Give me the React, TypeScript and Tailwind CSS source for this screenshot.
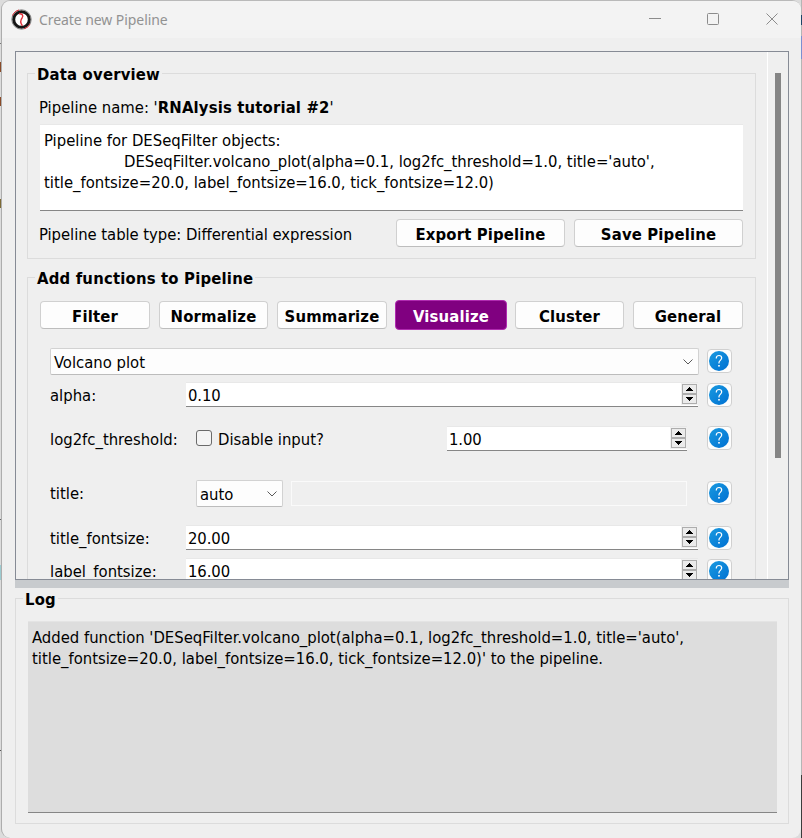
import React from "react";

function Legend({ children, className }: { children: React.ReactNode; className: string }) {
  return (
    <legend className={`h-[21px] pt-[1px] text-[16.5px] leading-[21px] font-bold tracking-[0.2px] whitespace-nowrap ${className}`}>
      {children}
    </legend>
  );
}

function Help({ className = "" }: { className?: string }) {
  return (
    <button
      className={`flex h-[24px] w-[25px] shrink-0 items-center rounded-[4px] border border-[#d0d0d0] bg-[#fdfdfd] pl-px ${className}`}
    >
      <svg width="20" height="20" viewBox="0 0 20 20" className="shrink-0">
        <defs>
          <linearGradient id="help" x1="0" y1="0" x2="1" y2="1">
            <stop offset="0" stopColor="#199ae0" />
            <stop offset="1" stopColor="#0070d2" />
          </linearGradient>
        </defs>
        <circle cx="10" cy="10" r="10" fill="url(#help)" />
        <path
          d="M7.3 7.6V7.1C7.3 5.5 8.5 4.5 10 4.5s2.7 1 2.7 2.6c0 2.1-2.7 2.4-2.7 4.4v1"
          fill="none"
          stroke="#fff"
          strokeWidth="1.2"
        />
        <rect x="9.2" y="14" width="1.6" height="1.6" fill="#fff" />
      </svg>
    </button>
  );
}

function Arrow({ down = false }: { down?: boolean }) {
  return (
    <span className="flex h-[10px] w-[15px] items-center justify-center border border-[#adadad] bg-[#ebebeb]">
      <svg width="7" height="4" viewBox="0 0 7 4" shapeRendering="crispEdges">
        <path
          d={down ? "M0 0h7v1h-1v1h-1v1h-1v1h-1v-1h-1v-1h-1v-1h-1z" : "M3 0h1v1h1v1h1v1h1v1h-7v-1h1v-1h1v-1h1z"}
          fill="#000"
        />
      </svg>
    </span>
  );
}

function Spin({ value, className }: { value: string; className: string }) {
  return (
    <div className={`flex shrink-0 items-start justify-between border-t border-b border-t-[#e8e8e8] border-b-[#868686] bg-white pl-[2px] ${className}`}>
      <span className="leading-[25px] tracking-[-0.1px]">{value}</span>
      <div className="flex flex-col border border-[#f0f0f0]">
        <Arrow />
        <Arrow down />
      </div>
    </div>
  );
}

function Chevron() {
  return (
    <svg width="10" height="6" viewBox="0 0 10 6" className="shrink-0">
      <path d="M.5.5 5 5 9.5.5" fill="none" stroke="#5a5a5a" strokeWidth="1" />
    </svg>
  );
}

function Combo({ value, className }: { value: string; className: string }) {
  return (
    <div className={`flex h-[27px] shrink-0 items-center justify-between rounded-[2px] border border-[#d2d2d2] border-b-[#bcbcbc] bg-[#fdfdfd] pl-[3px] ${className}`}>
      <span className="pt-px leading-[21px]">{value}</span>
      <Chevron />
    </div>
  );
}

function Button({ children, className = "" }: { children: React.ReactNode; className?: string }) {
  return (
    <button
      className={`h-[28px] shrink-0 rounded-[4px] border border-[#d0d0d0] border-b-[#bdbdbd] bg-[#fdfdfd] pt-[2px] text-center leading-[25px] font-bold tracking-[0.17px] whitespace-nowrap ${className}`}
    >
      {children}
    </button>
  );
}

function Label({ children }: { children: React.ReactNode }) {
  return <span className="w-[136px] shrink-0 pt-[3px] leading-[21px] whitespace-nowrap">{children}</span>;
}

function TitleBar() {
  return (
    <header className="flex h-[37px] shrink-0 items-center rounded-t-[8px] bg-[#f3f3f3] pl-[9px] text-[#929292]">
      <svg width="21" height="21" viewBox="0 0 21 21">
        <circle cx="10.5" cy="10.5" r="7.8" fill="#fff" stroke="#151515" strokeWidth="3" />
        <circle cx="10.5" cy="10.5" r="9.7" fill="none" stroke="#666" strokeWidth=".8" />
        <path d="M1.5 6.5C2.8 3.5 5 1.6 8 1M19 15c-1.4 2.5-3.5 4-6 4.6" stroke="#e0323c" strokeWidth="1" fill="none" />
        <path d="M8 4.5c3 .3 4.8 1.8 3.2 4.2-2 2.6-2.2 5 .2 8" stroke="#e0323c" strokeWidth="1.4" fill="none" />
      </svg>
      <span className="ml-[7px] font-['Noto_Sans'] text-[14px] tracking-[-0.07px] whitespace-nowrap">Create new Pipeline</span>
      <svg width="130" height="14" viewBox="0 0 130 14" className="mr-[22px] mb-[2px] ml-auto" fill="none" stroke="#8c8c8c">
        <path d="M0 6.5h12" />
        <rect x="58.5" y="1.5" width="11" height="11" rx="1" />
        <path d="m117.5 1.5 11 11m0-11-11 11" />
      </svg>
    </header>
  );
}

export default function App() {
  return (
    <div className="flex h-[838px] w-[802px] overflow-hidden bg-[#dcdcdc] font-['DejaVu_Sans_Condensed','DejaVu_Sans',sans-serif] text-[16.5px] text-black">
      <div className="flex w-[1px] shrink-0 flex-col pt-[43px]">
        <div className="h-px bg-[#777]" />
        <div className="mt-[18px] h-[10px] bg-[#8a4b28]" />
        <div className="mt-[25px] h-[9px] bg-[#8a4b28]" />
        <div className="mt-[93px] h-[9px] bg-[#7d6a35]" />
        <div className="mt-[311px] h-px bg-[#666]" />
        <div className="mt-[45px] h-[15px] bg-[#9ccbd0]" />
        <div className="mt-[170px] h-px bg-[#555]" />
      </div>
      <main className="mt-px flex h-[837px] w-[800px] shrink-0 flex-col rounded-[9px] border-l border-[#adadad] bg-[#efefef] shadow-[0_-1px_0_#b9b9b9]">
        <TitleBar />

        <section className="mt-[13px] ml-[13px] flex h-[529px] w-[774px] shrink-0 overflow-hidden border border-[#868b95]">
          <div className="h-[600px] w-[751px] shrink-0 pl-[11px]">
            <fieldset className="mt-[11px] h-[196px] w-[729px] border border-[#dcdcdc]">
              <Legend className="ml-[7px] px-[2px]">Data overview</Legend>
              <div className="ml-[11px] h-[35px] pt-[13px] leading-[22px]">
                Pipeline name: '<b className="tracking-[0.17px]">RNAlysis tutorial #2</b>'
              </div>
              <div className="mt-[5px] ml-[12px] h-[87px] w-[703px] border-t border-b border-t-[#e8e8e8] border-b-[#868686] bg-white pt-[5px] pl-[4px] leading-[21px] whitespace-nowrap">
                <div>Pipeline for DESeqFilter objects:</div>
                <div className="pl-[80px]">DESeqFilter.volcano_plot(alpha=0.1, log2fc_threshold=1.0, title='auto',</div>
                <div>title_fontsize=20.0, label_fontsize=16.0, tick_fontsize=12.0)</div>
              </div>
              <div className="mt-[8px] ml-[11px] flex h-[28px] items-center">
                <span className="w-[357px] pt-[3px] leading-[22px] tracking-[-0.05px] whitespace-nowrap">Pipeline table type: Differential expression</span>
                <Button className="w-[169px]">Export Pipeline</Button>
                <Button className="ml-[9px] w-[169px]">Save Pipeline</Button>
              </div>
            </fieldset>

            <fieldset className="mt-[8px] h-[400px] w-[729px] border border-[#dcdcdc]">
              <Legend className="ml-[7px] px-[2px]">Add functions to Pipeline</Legend>
              <div className="mt-[12px] ml-[12px] flex h-[30px] items-center">
                <Button className="w-[110px]">Filter</Button>
                <Button className="ml-[9px] w-[109px]">Normalize</Button>
                <Button className="ml-[9px] w-[110px]">Summarize</Button>
                <button className="ml-[8px] h-[30px] w-[112px] shrink-0 rounded-[4px] border border-[#b02bb0] bg-[#800080] pt-[2px] leading-[27px] font-bold tracking-[0.17px] text-white">
                  Visualize
                </button>
                <Button className="ml-[8px] w-[109px]">Cluster</Button>
                <Button className="ml-[9px] w-[110px]">General</Button>
              </div>
              <div className="ml-[22px] flex flex-col">
                <div className="mt-[18px] flex h-[27px]">
                  <Combo value="Volcano plot" className="w-[649px] pr-[5px]" />
                  <Help className="mt-px ml-[8px]" />
                </div>
                <div className="mt-[7px] flex h-[25px]">
                  <Label>alpha:</Label>
                  <Spin value="0.10" className="h-[25px] w-[512px]" />
                  <Help className="mt-px ml-[9px]" />
                </div>
                <div className="mt-[19px] flex h-[25px]">
                  <Label>log2fc_threshold:</Label>
                  <span className="mt-[4px] ml-[10px] h-[16px] w-[16px] shrink-0 rounded-[3px] border border-[#6a6a6a] bg-[#f4f4f4]" />
                  <span className="w-[235px] shrink-0 pt-[3px] pl-[6px] leading-[21px]">Disable input?</span>
                  <Spin value="1.00" className="h-[25px] w-[240px]" />
                  <Help className="ml-[20px]" />
                </div>
                <div className="mt-[29px] flex h-[27px]">
                  <Label>title:</Label>
                  <Combo value="auto" className="ml-[10px] w-[87px] pr-[5px]" />
                  <div className="mt-px ml-[8px] h-[25px] w-[396px] shrink-0 border border-[#fafafa] bg-[#efefef]" />
                  <Help className="mt-px ml-[20px]" />
                </div>
                <div className="mt-[18px] flex h-[25px]">
                  <Label>title_fontsize:</Label>
                  <Spin value="20.00" className="h-[25px] w-[512px]" />
                  <Help className="mt-px ml-[9px]" />
                </div>
                <div className="mt-[8px] flex h-[25px]">
                  <Label>label_fontsize:</Label>
                  <Spin value="16.00" className="h-[25px] w-[512px]" />
                  <Help className="mt-px ml-[9px]" />
                </div>
              </div>
            </fieldset>
          </div>
          <div className="flex h-full w-[21px] border-l border-white pt-[21px] pl-[7px]">
            <div className="h-[385px] w-[6px] bg-[#858585]" />
          </div>
        </section>

        <div className="ml-[13px] h-[8px] w-[774px] shrink-0 bg-[#c8cbce]" />

        <fieldset className="ml-[13px] h-[236px] w-[774px] shrink-0 border border-[#dcdcdc]">
          <Legend className="ml-[7px] px-[2px]">Log</Legend>
          <div className="mt-[12px] ml-[12px] h-[192px] w-[749px] border-t border-b border-t-[#e4e4e4] border-b-[#868686] bg-[#dddddd] pt-[5px] pl-[4px] leading-[21px] whitespace-nowrap">
            <div>Added function 'DESeqFilter.volcano_plot(alpha=0.1, log2fc_threshold=1.0, title='auto',</div>
            <div>title_fontsize=20.0, label_fontsize=16.0, tick_fontsize=12.0)' to the pipeline.</div>
          </div>
        </fieldset>
      </main>
      <div className="flex w-[1px] shrink-0 flex-col bg-[#b5b5b5] pt-[15px]">
        <div className="h-[10px] bg-[#1d4568]" />
        <div className="mt-[11px] h-[23px] bg-[#7b8fd0]" />
        <div className="mt-[716px] h-[63px] bg-[#3c3c3c]" />
      </div>
    </div>
  );
}
